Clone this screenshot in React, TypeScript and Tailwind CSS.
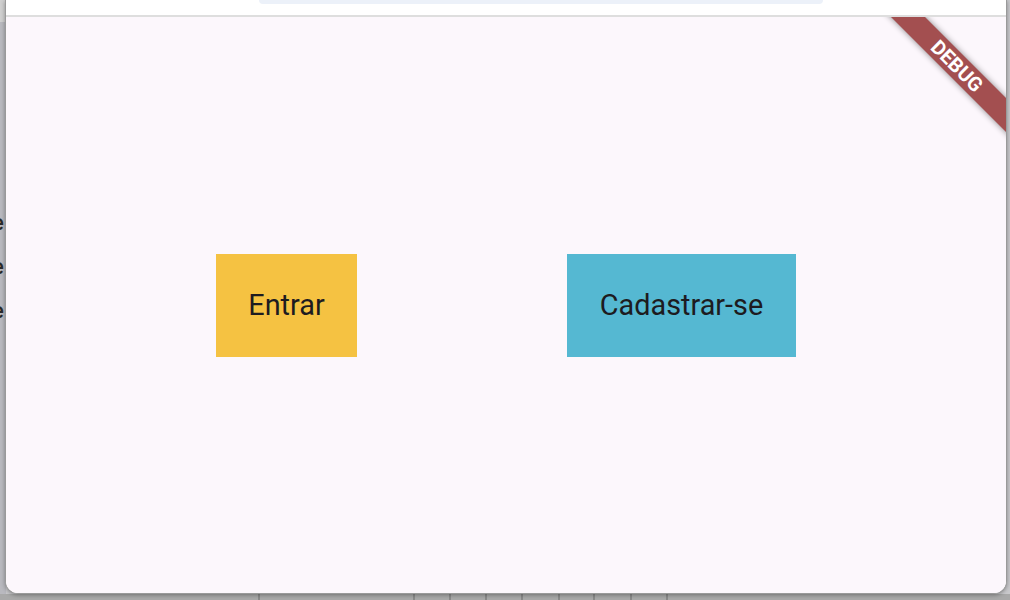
import React from "react";

export default function App() {
  const seps = [258, 413, 449, 485, 521, 558, 593, 630, 666];
  return (
    <div className="relative w-[1010px] h-[600px] overflow-hidden bg-[#c9c9cc]" style={{ fontFamily: "Roboto, 'Noto Sans', sans-serif" }}>
      {/* desktop background */}
      <div className="absolute left-0 top-0 w-[6px] h-[22px] bg-[#d0d0d0]" />
      <div className="absolute left-0 top-[22px] w-[6px] h-[578px] bg-[#b9b9bf]" />
      <div className="absolute left-[-8px] top-[211px] flex flex-col gap-[20px] text-[22px] leading-[24px] font-medium text-[#2a2a2a]">
        <span>e</span>
        <span>e</span>
        <span>e</span>
      </div>
      <div className="absolute left-0 top-[594px] w-[1010px] h-[6px] bg-[#a9a9a9]">
        {seps.map((x) => (
          <div key={x} className="absolute top-0 h-[6px] w-[2px] bg-[#8a8a8a]" style={{ left: x }} />
        ))}
      </div>

      {/* window */}
      <div className="absolute left-[5px] top-0 w-[1002px] h-[594px] flex flex-col bg-white border-x border-b border-[#9a9a9a] rounded-b-[13px] overflow-hidden shadow-[0_1px_4px_rgba(0,0,0,0.35)]">
        <div className="relative h-[17px] shrink-0 bg-white border-b-2 border-[#dedede]">
          <div className="absolute left-[253px] top-0 w-[564px] h-[4px] rounded-b-full bg-[#ecf1f9]" />
        </div>
        <div className="relative flex-1 bg-[#fcf7fc] flex items-center justify-evenly">
          <button className="w-[141px] h-[103px] flex items-center justify-center bg-[#f5c242] text-[28.8px] leading-none text-[#1d1b20]">
            Entrar
          </button>
          <button className="w-[229px] h-[103px] flex items-center justify-center bg-[#55b8d2] text-[28.8px] leading-none text-[#1d1b20]">
            Cadastrar-se
          </button>

          {/* debug banner */}
          <div className="absolute right-0 top-0 w-[170px] h-[170px] overflow-hidden pointer-events-none">
            <div
              className="absolute w-[240px] h-[24px] bg-[#a34f50] shadow-[0_0_6px_rgba(0,0,0,0.45)] flex items-center justify-center rotate-45"
              style={{ right: 49 - 120, top: 49 - 12 }}
            >
              <span className="text-white font-bold text-[20px] leading-none">DEBUG</span>
            </div>
          </div>
        </div>
      </div>
    </div>
  );
}
